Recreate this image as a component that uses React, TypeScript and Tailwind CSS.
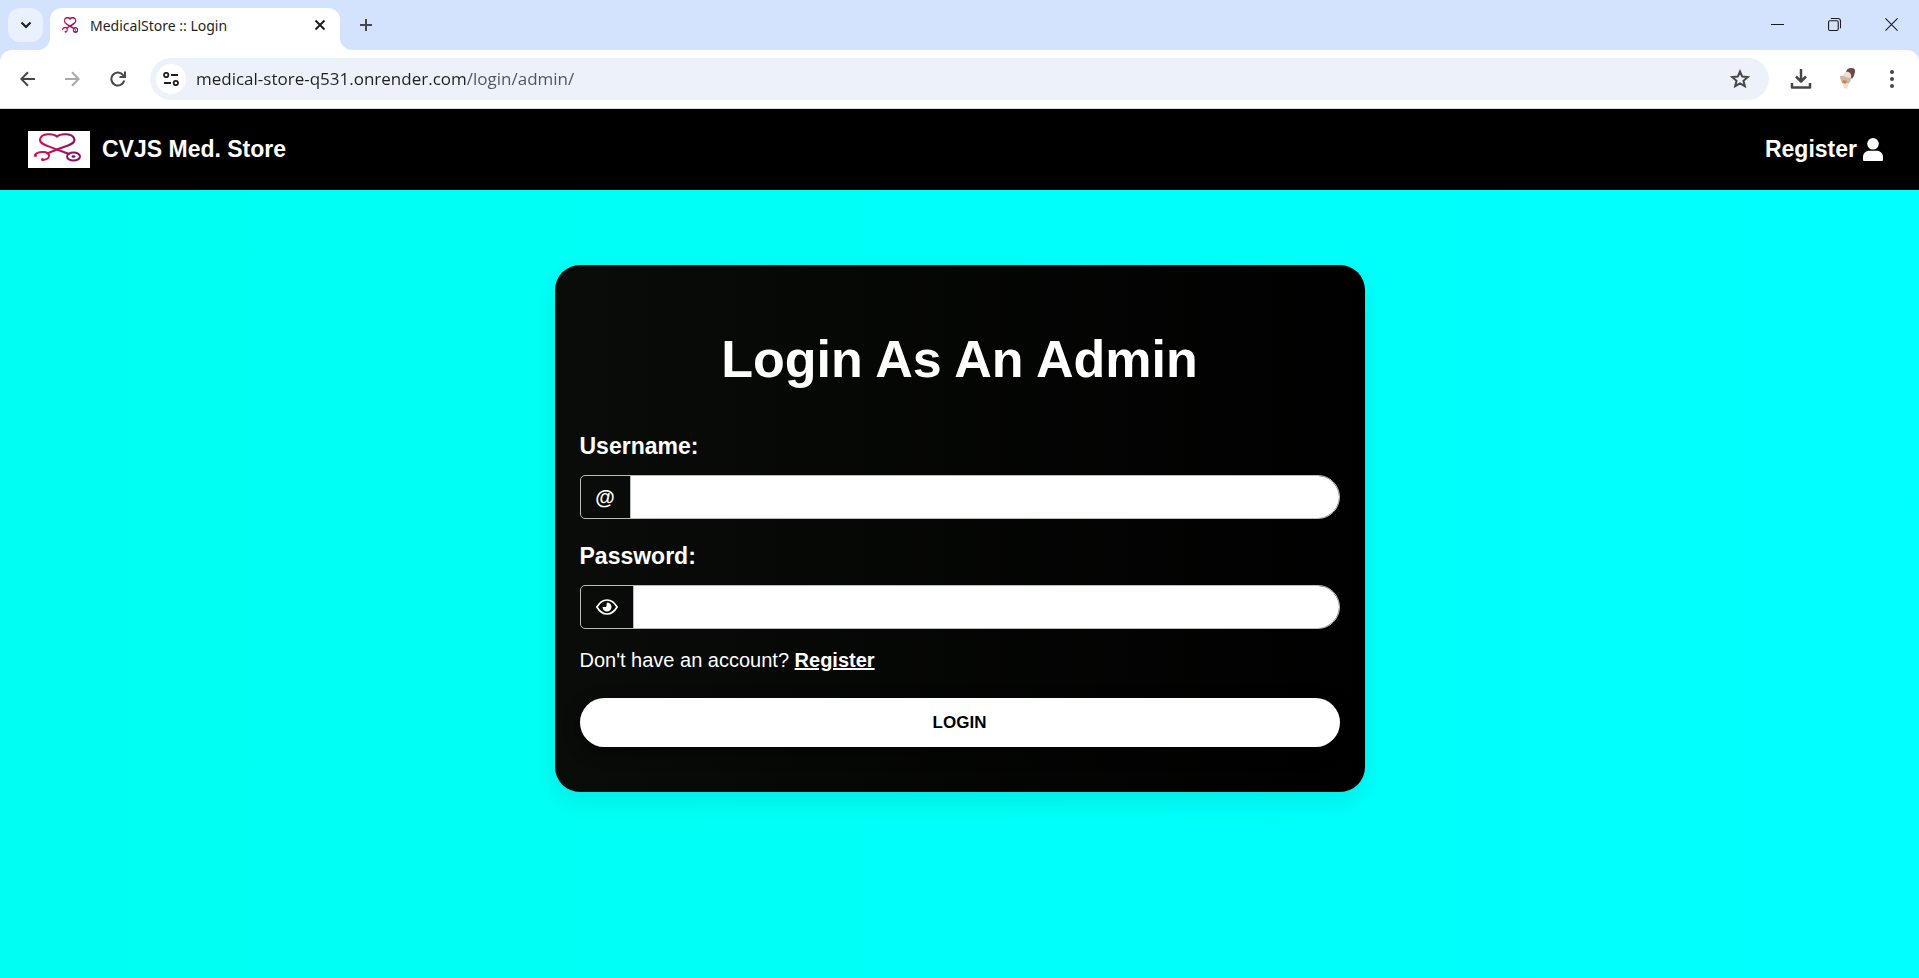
import React from "react";

function Stethoscope({ className, viewBox = "0 0 62 37", strokeWidth = 2 }: { className?: string; viewBox?: string; strokeWidth?: number }) {
  const id = React.useId();
  return (
    <svg viewBox={viewBox} preserveAspectRatio="none" className={className} fill="none" aria-hidden="true">
      <defs>
        <linearGradient id={id} x1="6" y1="0" x2="54" y2="0" gradientUnits="userSpaceOnUse">
          <stop offset="0" stopColor="#e0124f" />
          <stop offset="1" stopColor="#7a0f6b" />
        </linearGradient>
      </defs>
      <g stroke={`url(#${id})`} strokeWidth={strokeWidth} strokeLinecap="round" strokeLinejoin="round">
        <path d="M29 5.500C26 2.500 13 1.500 12 8.500C11.500 14 22 15.500 29 18.500L41 23" />
        <path d="M29 5.500C32 2.500 45 1.500 46.500 8.500C47 14 36 15.500 29 18.500L19 22.500" />
        <path d="M7 24C9 20.500 20 19.500 21 24C21.500 27 19 28.500 15 29" />
        <ellipse cx="45.500" cy="25.500" rx="6.500" ry="4" />
      </g>
      <circle cx="7.500" cy="24.500" r="1.500" fill="#e0124f" />
      <circle cx="14.500" cy="28.500" r="1.500" fill="#c01257" />
      <ellipse cx="45.500" cy="25.500" rx="2" ry="1.200" fill="#7a0f6b" />
    </svg>
  );
}

function TabStrip() {
  return (
    <div className="flex h-[50px] items-start bg-[#d3e3fd]">
      <button aria-label="Search tabs" className="ml-2 mt-2 flex h-[34px] w-[35px] items-center justify-center rounded-xl bg-[#e9f0fe]">
        <svg viewBox="0 0 12 8" className="h-2 w-3" fill="none" stroke="#1f1f1f" strokeWidth="2.200"><path d="M1.500 1.500 6 6l4.500-4.500" /></svg>
      </button>
      <div className="flex self-stretch pt-2">
        <svg viewBox="0 0 12 12" className="-ml-[5px] size-3 self-end" fill="#fff" aria-hidden="true"><path d="M0 12A12 12 0 0 0 12 0V12Z" /></svg>
        <div className="flex w-[290px] items-center rounded-t-xl bg-white pb-2 pl-3 pr-[14px]">
          <Stethoscope className="h-4 w-4" viewBox="5 2 48 29" strokeWidth={3} />
          <span className="ml-3 flex-1 text-[14px] text-[#1f1f1f]">MedicalStore :: Login</span>
          <button aria-label="Close tab">
            <svg viewBox="0 0 12 12" className="size-3" stroke="#1f1f1f" strokeWidth="2"><path d="m1.500 1.500 9 9m0-9-9 9" /></svg>
          </button>
        </div>
        <svg viewBox="0 0 12 12" className="size-3 self-end" fill="#fff" aria-hidden="true"><path d="M0 0A12 12 0 0 0 12 12H0Z" /></svg>
      </div>
      <button aria-label="New tab" className="ml-[7px] mt-[18px]">
        <svg viewBox="0 0 14 14" className="size-[14px]" stroke="#474747" strokeWidth="2"><path d="M7 1v12M1 7h12" /></svg>
      </button>
      <div className="ml-auto mr-[21px] mt-[18px] flex items-center gap-11 text-[#1b1b1b]">
        <button aria-label="Minimize"><svg viewBox="0 0 13 13" className="size-[13px]" stroke="currentColor"><path d="M0 6.500h13" /></svg></button>
        <button aria-label="Restore"><svg viewBox="0 0 14 14" className="size-[13px]" fill="none" stroke="currentColor" strokeWidth="1.200"><rect x=".6" y="3" width="10.400" height="10.400" rx="1.500" /><path d="M3 .6h7.500a3 3 0 0 1 3 3V11" /></svg></button>
        <button aria-label="Close"><svg viewBox="0 0 14 14" className="size-[13px]" stroke="currentColor" strokeWidth="1.200"><path d="m.5.500 13 13m0-13-13 13" /></svg></button>
      </div>
    </div>
  );
}

function Toolbar() {
  return (
    <div className="bg-[#d3e3fd]">
      <div className="flex h-[59px] items-center rounded-t-xl border-b border-[#dcdcdc] bg-white pl-5 pr-6">
        <button aria-label="Back"><svg viewBox="0 0 16 16" className="size-4" fill="none" stroke="#474747" strokeWidth="2"><path d="M15 8H1.500M8 1.200 1.300 8 8 14.800" /></svg></button>
        <button aria-label="Forward" className="ml-7"><svg viewBox="0 0 16 16" className="size-4" fill="none" stroke="#a9a9a9" strokeWidth="2"><path d="M1 8h13.500M8 1.200 14.700 8 8 14.800" /></svg></button>
        <button aria-label="Reload" className="ml-[30px]"><svg viewBox="0 0 16 16" className="size-4" fill="none" stroke="#474747" strokeWidth="2"><path d="M14.200 9.500A6.500 6.500 0 1 1 13.200 4.300L14 5.500" /><path d="M15 .5V6H9.500" /></svg></button>
        <div className="ml-6 flex h-[42px] flex-1 items-center rounded-full bg-[#ecf1fa] pl-[6px] pr-[19px]">
          <button aria-label="View site information" className="flex size-[30px] items-center justify-center rounded-full bg-white">
            <svg viewBox="0 0 16 14" className="h-[14px] w-4" fill="none" stroke="#1f1f1f" strokeWidth="1.800"><circle cx="3.200" cy="3" r="2.200" /><path d="M8 3h7M1 11h7" /><circle cx="12.800" cy="11" r="2.200" /></svg>
          </button>
          <input aria-label="Address" defaultValue="medical-store-q531.onrender.com/login/admin/" className="ml-[10px] flex-1 bg-linear-to-r from-[#1f1f1f] from-[270px] to-[#50535a] to-[270px] bg-clip-text font-['Open_Sans',sans-serif] text-[17px] text-transparent caret-black outline-none" />
          <button aria-label="Bookmark this tab"><svg viewBox="0 0 20 20" className="size-5" fill="none" stroke="#474747" strokeWidth="2"><path d="m10 2.500 2.200 5.100 5.500.5-4.200 3.700 1.300 5.400-4.800-2.900-4.800 2.900 1.300-5.400-4.200-3.700 5.500-.5Z" /></svg></button>
        </div>
        <button aria-label="Downloads" className="ml-[21px]"><svg viewBox="0 0 22 22" className="size-[22px]" fill="none" stroke="#474747" strokeWidth="2.500"><path d="M11 1v12M6 8.500l5 5 5-5M2 15v4.500h18V15" strokeLinejoin="round" /></svg></button>
        <button aria-label="Profile" className="ml-[25px]">
          <svg viewBox="0 0 20 24" className="h-6 w-5"><path d="M9 5q1-4 5-4 5 0 4 4-1 5-3 7l-3-4Z" fill="#6a4d45" /><path d="M8 5q3-1 5 1t1 5l-5 2-3-4Z" fill="#f3ddd0" /><path d="M3 9q3-1 6 1l5 1q0 4-3 6l-5-1q-3-2-3-7Z" fill="#cbb8a8" /><path d="m6 13 4 1-1 3-4-1Z" fill="#dc7f45" /><path d="m6 17 6-1-1 4-1 2-2-1-1 1Z" fill="#efe0d4" /></svg>
        </button>
        <button aria-label="Menu" className="ml-8"><svg viewBox="0 0 6 20" className="h-5 w-[6px]" fill="#474747"><circle cx="3" cy="3" r="2" /><circle cx="3" cy="10" r="2" /><circle cx="3" cy="17" r="2" /></svg></button>
      </div>
    </div>
  );
}

const labelClass = "block text-[23px] font-bold leading-7";
const groupClass = "mt-[15px] flex h-11 overflow-hidden rounded-l-[5px] rounded-r-[22px] border border-[#bbb]";
const fieldClass = "min-w-0 flex-1 bg-white px-3 text-[20px] text-black outline-none";

export default function App() {
  return (
    <div className="flex min-h-screen flex-col font-['Liberation_Sans',Arial,sans-serif]">
      <div className="font-['Noto_Sans',sans-serif]">
        <TabStrip />
        <Toolbar />
      </div>
      <header className="flex h-[81px] items-center bg-black pl-7 pr-9 text-[23px] font-bold text-white">
        <a href="#home" className="flex items-center gap-3">
          <span className="h-[37px] w-[62px] bg-white"><Stethoscope className="h-full w-full" /></span>
          CVJS Med. Store
        </a>
        <a href="#register" className="ml-auto flex items-center gap-[6px]">
          Register
          <svg viewBox="0 0 20 23" className="h-[23px] w-5" fill="currentColor"><circle cx="10" cy="5.800" r="5.800" /><path d="M0 22v-3.500A6 6 0 0 1 6 12.700h8a6 6 0 0 1 6 5.800V22q0 1-1 1H1q-1 0-1-1Z" /></svg>
        </a>
      </header>
      <main className="flex-1 bg-linear-to-r/srgb from-[#00fff2] to-[#00ffff] px-6 py-[75px]">
        <form className="mx-auto max-w-[810px] rounded-[25px] bg-linear-to-r/srgb from-[#090c08] to-black px-[25px] pb-[45px] pt-[63px] text-white shadow-[0_10px_25px_rgba(0,0,0,0.08)]" onSubmit={(e) => e.preventDefault()}>
          <h1 className="text-center text-[52px] font-bold leading-[62px]">Login As An Admin</h1>
          <label htmlFor="username" className={`mt-[42px] ${labelClass}`}>Username:</label>
          <div className={groupClass}>
            <span className="flex w-[50px] items-center justify-center border-r border-[#bbb] text-[20px] font-bold">@</span>
            <input id="username" type="text" className={fieldClass} />
          </div>
          <label htmlFor="password" className={`mt-[23px] ${labelClass}`}>Password:</label>
          <div className={groupClass}>
            <button type="button" aria-label="Show password" className="flex w-[53px] items-center justify-center border-r border-[#bbb]">
              <svg viewBox="0 0 22 16" className="h-4 w-[22px]" fill="none" stroke="currentColor" strokeWidth="1.700"><path d="M.9 8Q5 1 11 1t10.100 7q-4.100 7-10.100 7T.9 8Z" /><path d="M11 3.500A4.500 4.500 0 1 1 6.500 8H9A1.500 1.500 0 0 0 10.500 6Z" fill="currentColor" stroke="none" /></svg>
            </button>
            <input id="password" type="password" className={fieldClass} />
          </div>
          <p className="mt-[17px] text-[20px] leading-7">Don't have an account? <a href="#register" className="font-bold underline">Register</a></p>
          <button type="submit" className="mt-6 h-[49px] w-full rounded-full bg-white text-[17px] font-bold text-black shadow-[0_5px_15px_rgba(0,0,0,0.5)]">LOGIN</button>
        </form>
      </main>
    </div>
  );
}
